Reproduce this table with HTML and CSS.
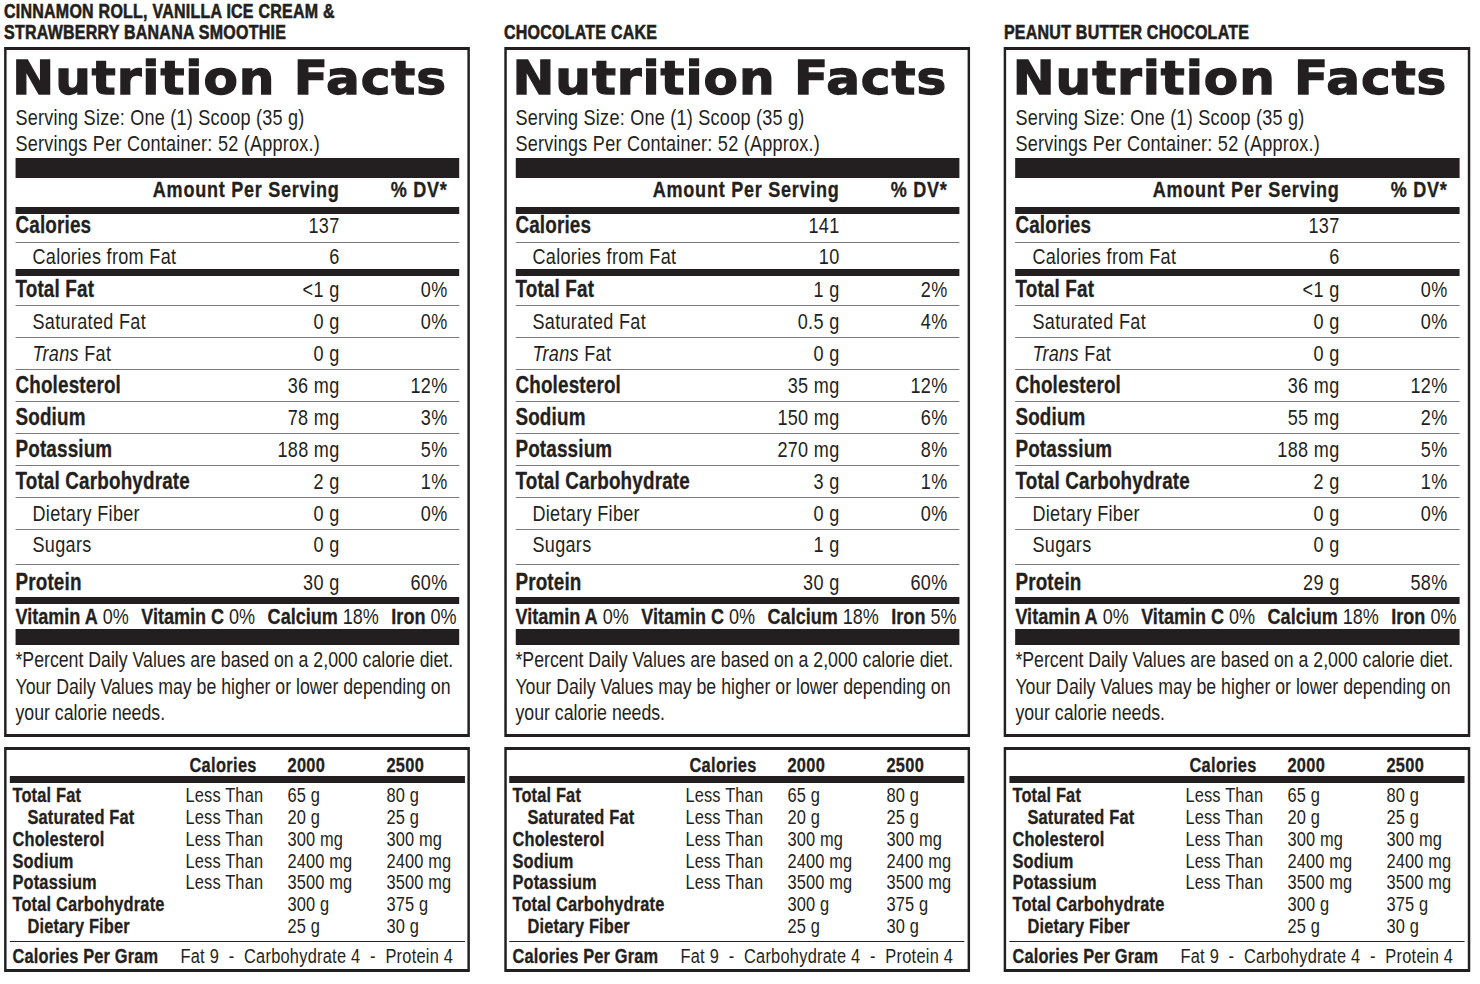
FILE: index.html
```html
<!DOCTYPE html>
<html lang="en">
<head>
<meta charset="utf-8">
<title>Nutrition Facts</title>
<link rel="stylesheet" href="styles.css">
</head>
<body>
<div class="sheet">
<div class="page">

  <section class="panel">
    <h2 class="flavor"><span>CINNAMON ROLL, VANILLA ICE CREAM &amp;<br>STRAWBERRY BANANA SMOOTHIE</span></h2>
    <div class="facts">
      <h1 class="title"><span class="title-t">Nutrition Facts</span></h1>
      <p class="serving first">Serving Size: One (1) Scoop (35 g)</p>
      <p class="serving">Servings Per Container: 52 (Approx.)</p>
      <div class="bar bar20"></div>
      <div class="row head"><span class="n"></span><span class="v">Amount Per Serving</span><span class="d">% DV*</span></div>
      <div class="bar bar7"></div>
      <div class="row cal"><span class="n">Calories</span><span class="v">137</span><span class="d"></span></div>
      <div class="row sub calfat"><span class="n">Calories from Fat</span><span class="v">6</span><span class="d"></span></div>
      <div class="bar bar7"></div>
      <div class="row tf"><span class="n">Total Fat</span><span class="v">&lt;1 g</span><span class="d">0%</span></div>
      <div class="row sub"><span class="n">Saturated Fat</span><span class="v">0 g</span><span class="d">0%</span></div>
      <div class="row sub"><span class="n"><i>Trans</i> Fat</span><span class="v">0 g</span><span class="d"></span></div>
      <div class="row"><span class="n">Cholesterol</span><span class="v">36 mg</span><span class="d">12%</span></div>
      <div class="row"><span class="n">Sodium</span><span class="v">78 mg</span><span class="d">3%</span></div>
      <div class="row"><span class="n">Potassium</span><span class="v">188 mg</span><span class="d">5%</span></div>
      <div class="row"><span class="n">Total Carbohydrate</span><span class="v">2 g</span><span class="d">1%</span></div>
      <div class="row sub"><span class="n">Dietary Fiber</span><span class="v">0 g</span><span class="d">0%</span></div>
      <div class="row sub sug"><span class="n">Sugars</span><span class="v">0 g</span><span class="d"></span></div>
      <div class="row pro"><span class="n">Protein</span><span class="v">30 g</span><span class="d">60%</span></div>
      <div class="bar bar7"></div>
      <div class="vit"><span><b>Vitamin A</b> 0%</span><span><b>Vitamin C</b> 0%</span><span><b>Calcium</b> 18%</span><span><b>Iron</b> 0%</span></div>
      <div class="bar bar16"></div>
      <p class="foot">*Percent Daily Values are based on a 2,000 calorie diet.<br>Your Daily Values may be higher or lower depending on<br>your calorie needs.</p>
    </div>
    <div class="daily">
      <div class="dgrid dhead"><span></span><span class="dcal">Calories</span><span>2000</span><span>2500</span></div>
      <div class="bar dbar"></div>
      <div class="dlist">
        <div class="dgrid"><b>Total Fat</b><span>Less Than</span><span>65 g</span><span>80 g</span></div>
        <div class="dgrid"><b class="ind">Saturated Fat</b><span>Less Than</span><span>20 g</span><span>25 g</span></div>
        <div class="dgrid"><b>Cholesterol</b><span>Less Than</span><span>300 mg</span><span>300 mg</span></div>
        <div class="dgrid"><b>Sodium</b><span>Less Than</span><span>2400 mg</span><span>2400 mg</span></div>
        <div class="dgrid"><b>Potassium</b><span>Less Than</span><span>3500 mg</span><span>3500 mg</span></div>
        <div class="dgrid"><b>Total Carbohydrate</b><span></span><span>300 g</span><span>375 g</span></div>
        <div class="dgrid"><b class="ind">Dietary Fiber</b><span></span><span>25 g</span><span>30 g</span></div>
      </div>
      <div class="cpg"><b class="cpg-l">Calories Per Gram</b><span class="cpg-v">Fat 9  -  Carbohydrate 4  -  Protein 4</span></div>
    </div>
  </section>

  <section class="panel">
    <h2 class="flavor"><span>CHOCOLATE CAKE</span></h2>
    <div class="facts">
      <h1 class="title"><span class="title-t">Nutrition Facts</span></h1>
      <p class="serving first">Serving Size: One (1) Scoop (35 g)</p>
      <p class="serving">Servings Per Container: 52 (Approx.)</p>
      <div class="bar bar20"></div>
      <div class="row head"><span class="n"></span><span class="v">Amount Per Serving</span><span class="d">% DV*</span></div>
      <div class="bar bar7"></div>
      <div class="row cal"><span class="n">Calories</span><span class="v">141</span><span class="d"></span></div>
      <div class="row sub calfat"><span class="n">Calories from Fat</span><span class="v">10</span><span class="d"></span></div>
      <div class="bar bar7"></div>
      <div class="row tf"><span class="n">Total Fat</span><span class="v">1 g</span><span class="d">2%</span></div>
      <div class="row sub"><span class="n">Saturated Fat</span><span class="v">0.5 g</span><span class="d">4%</span></div>
      <div class="row sub"><span class="n"><i>Trans</i> Fat</span><span class="v">0 g</span><span class="d"></span></div>
      <div class="row"><span class="n">Cholesterol</span><span class="v">35 mg</span><span class="d">12%</span></div>
      <div class="row"><span class="n">Sodium</span><span class="v">150 mg</span><span class="d">6%</span></div>
      <div class="row"><span class="n">Potassium</span><span class="v">270 mg</span><span class="d">8%</span></div>
      <div class="row"><span class="n">Total Carbohydrate</span><span class="v">3 g</span><span class="d">1%</span></div>
      <div class="row sub"><span class="n">Dietary Fiber</span><span class="v">0 g</span><span class="d">0%</span></div>
      <div class="row sub sug"><span class="n">Sugars</span><span class="v">1 g</span><span class="d"></span></div>
      <div class="row pro"><span class="n">Protein</span><span class="v">30 g</span><span class="d">60%</span></div>
      <div class="bar bar7"></div>
      <div class="vit"><span><b>Vitamin A</b> 0%</span><span><b>Vitamin C</b> 0%</span><span><b>Calcium</b> 18%</span><span><b>Iron</b> 5%</span></div>
      <div class="bar bar16"></div>
      <p class="foot">*Percent Daily Values are based on a 2,000 calorie diet.<br>Your Daily Values may be higher or lower depending on<br>your calorie needs.</p>
    </div>
    <div class="daily">
      <div class="dgrid dhead"><span></span><span class="dcal">Calories</span><span>2000</span><span>2500</span></div>
      <div class="bar dbar"></div>
      <div class="dlist">
        <div class="dgrid"><b>Total Fat</b><span>Less Than</span><span>65 g</span><span>80 g</span></div>
        <div class="dgrid"><b class="ind">Saturated Fat</b><span>Less Than</span><span>20 g</span><span>25 g</span></div>
        <div class="dgrid"><b>Cholesterol</b><span>Less Than</span><span>300 mg</span><span>300 mg</span></div>
        <div class="dgrid"><b>Sodium</b><span>Less Than</span><span>2400 mg</span><span>2400 mg</span></div>
        <div class="dgrid"><b>Potassium</b><span>Less Than</span><span>3500 mg</span><span>3500 mg</span></div>
        <div class="dgrid"><b>Total Carbohydrate</b><span></span><span>300 g</span><span>375 g</span></div>
        <div class="dgrid"><b class="ind">Dietary Fiber</b><span></span><span>25 g</span><span>30 g</span></div>
      </div>
      <div class="cpg"><b class="cpg-l">Calories Per Gram</b><span class="cpg-v">Fat 9  -  Carbohydrate 4  -  Protein 4</span></div>
    </div>
  </section>

  <section class="panel">
    <h2 class="flavor"><span>PEANUT BUTTER CHOCOLATE</span></h2>
    <div class="facts">
      <h1 class="title"><span class="title-t">Nutrition Facts</span></h1>
      <p class="serving first">Serving Size: One (1) Scoop (35 g)</p>
      <p class="serving">Servings Per Container: 52 (Approx.)</p>
      <div class="bar bar20"></div>
      <div class="row head"><span class="n"></span><span class="v">Amount Per Serving</span><span class="d">% DV*</span></div>
      <div class="bar bar7"></div>
      <div class="row cal"><span class="n">Calories</span><span class="v">137</span><span class="d"></span></div>
      <div class="row sub calfat"><span class="n">Calories from Fat</span><span class="v">6</span><span class="d"></span></div>
      <div class="bar bar7"></div>
      <div class="row tf"><span class="n">Total Fat</span><span class="v">&lt;1 g</span><span class="d">0%</span></div>
      <div class="row sub"><span class="n">Saturated Fat</span><span class="v">0 g</span><span class="d">0%</span></div>
      <div class="row sub"><span class="n"><i>Trans</i> Fat</span><span class="v">0 g</span><span class="d"></span></div>
      <div class="row"><span class="n">Cholesterol</span><span class="v">36 mg</span><span class="d">12%</span></div>
      <div class="row"><span class="n">Sodium</span><span class="v">55 mg</span><span class="d">2%</span></div>
      <div class="row"><span class="n">Potassium</span><span class="v">188 mg</span><span class="d">5%</span></div>
      <div class="row"><span class="n">Total Carbohydrate</span><span class="v">2 g</span><span class="d">1%</span></div>
      <div class="row sub"><span class="n">Dietary Fiber</span><span class="v">0 g</span><span class="d">0%</span></div>
      <div class="row sub sug"><span class="n">Sugars</span><span class="v">0 g</span><span class="d"></span></div>
      <div class="row pro"><span class="n">Protein</span><span class="v">29 g</span><span class="d">58%</span></div>
      <div class="bar bar7"></div>
      <div class="vit"><span><b>Vitamin A</b> 0%</span><span><b>Vitamin C</b> 0%</span><span><b>Calcium</b> 18%</span><span><b>Iron</b> 0%</span></div>
      <div class="bar bar16"></div>
      <p class="foot">*Percent Daily Values are based on a 2,000 calorie diet.<br>Your Daily Values may be higher or lower depending on<br>your calorie needs.</p>
    </div>
    <div class="daily">
      <div class="dgrid dhead"><span></span><span class="dcal">Calories</span><span>2000</span><span>2500</span></div>
      <div class="bar dbar"></div>
      <div class="dlist">
        <div class="dgrid"><b>Total Fat</b><span>Less Than</span><span>65 g</span><span>80 g</span></div>
        <div class="dgrid"><b class="ind">Saturated Fat</b><span>Less Than</span><span>20 g</span><span>25 g</span></div>
        <div class="dgrid"><b>Cholesterol</b><span>Less Than</span><span>300 mg</span><span>300 mg</span></div>
        <div class="dgrid"><b>Sodium</b><span>Less Than</span><span>2400 mg</span><span>2400 mg</span></div>
        <div class="dgrid"><b>Potassium</b><span>Less Than</span><span>3500 mg</span><span>3500 mg</span></div>
        <div class="dgrid"><b>Total Carbohydrate</b><span></span><span>300 g</span><span>375 g</span></div>
        <div class="dgrid"><b class="ind">Dietary Fiber</b><span></span><span>25 g</span><span>30 g</span></div>
      </div>
      <div class="cpg"><b class="cpg-l">Calories Per Gram</b><span class="cpg-v">Fat 9  -  Carbohydrate 4  -  Protein 4</span></div>
    </div>
  </section>

</div>
</div>
</body>
</html>
```

FILE: styles.css
```css
* { box-sizing: border-box; }

html, body { overflow: hidden; }

body {
  margin: 0;
  background: #ffffff;
  color: #231f20;
  font-family: "Liberation Sans", Arial, sans-serif;
}

.sheet {
  width: 1480px;
  height: 984px;
  overflow: hidden;
}

/* The labels are set in a condensed face; no condensed face is installed,
   so the sheet is laid out wider and compressed horizontally by --k. */
.page {
  --k: 0.82;
  display: flex;
  width: calc(1480px / var(--k));
  gap: calc(34px / var(--k));
  padding-left: calc(4px / var(--k));
  transform: scaleX(var(--k));
  transform-origin: 0 0;
}

.panel {
  width: calc(466px / var(--k));
  flex: none;
  display: flex;
  flex-direction: column;
}

.flavor {
  height: 47px;
  margin: 0;
  padding-bottom: 4px;
  display: flex;
  flex-direction: column;
  justify-content: flex-end;
  font-size: 19.5px;
  line-height: 21px;
  font-weight: 700;
  letter-spacing: 0.3px;
  -webkit-text-stroke: 0.6px #231f20;
  white-space: nowrap;
}

/* main label */
.facts {
  border: 3px solid #231f20;
  border-left-width: calc(3px / var(--k));
  border-right-width: calc(3px / var(--k));
  padding: 0 calc(8px / var(--k)) 0 calc(9px / var(--k));
}

.title {
  margin: 0;
  padding-top: 6px;
  height: 50px;
  white-space: nowrap;
}
.title-t {
  display: inline-block;
  margin-left: calc(-3px / var(--k));
  transform: scaleX(calc(1.065 / var(--k)));
  transform-origin: 0 0;
  font-family: "DejaVu Sans", sans-serif;
  font-weight: 700;
  font-size: 47px;
  line-height: 44px;
  letter-spacing: 0.9px;
  -webkit-text-stroke: 1.3px #231f20;
}

.serving {
  margin: 0;
  font-size: 22px;
  line-height: 26px;
  letter-spacing: 0.3px;
  white-space: nowrap;
}
.serving.first { margin-top: 5px; }

.bar { background: #231f20; }
.bar20 { height: 20px; margin-top: 1px; }
.bar7 { height: 7px; }
.bar16 { height: 16px; }

.row {
  display: flex;
  align-items: baseline;
  height: 32px;
  padding-top: 4px;
  padding-right: calc(12px / var(--k));
  border-bottom: 1px solid #7a7a7a;
  line-height: 1;
  font-size: 22px;
  letter-spacing: 0.4px;
  white-space: nowrap;
}
.row .n { flex: 1; font-weight: 700; font-size: 23px; letter-spacing: 0.2px; -webkit-text-stroke: 0.3px #231f20; }
.row .v { text-align: right; }
.row .d { width: calc(108px / var(--k)); text-align: right; }

.row.sub { padding-top: 5.4px; }
.row.sub .n { font-weight: 400; font-size: 22px; letter-spacing: 0.4px; padding-left: calc(17px / var(--k)); -webkit-text-stroke: 0; }

.row.head { height: 29px; padding-top: 1.4px; border-bottom: 0; font-weight: 700; letter-spacing: 0.9px; -webkit-text-stroke: 0.3px #231f20; }
.row.cal { height: 29px; padding-top: 0; }
.row.calfat { height: 26px; padding-top: 3.4px; border-bottom: 0; }
.row.tf { height: 30px; padding-top: 1.5px; }
.row.sug { height: 35px; padding-top: 4.4px; }
.row.pro { height: 32px; padding-top: 5.5px; border-bottom: 0; }

.vit {
  display: flex;
  justify-content: space-between;
  align-items: baseline;
  height: 25px;
  padding-top: 2.4px;
  padding-right: calc(3px / var(--k));
  font-size: 22px;
  line-height: 1;
  white-space: nowrap;
}
.vit b { -webkit-text-stroke: 0.3px #231f20; }

.foot {
  margin: 0;
  padding: 2px 0 7.5px;
  font-size: 21.6px;
  line-height: 26.5px;
  white-space: nowrap;
}

/* daily values table */
.daily {
  margin-top: 10px;
  border: 3px solid #231f20;
  border-left-width: calc(3px / var(--k));
  border-right-width: calc(3px / var(--k));
  padding: 0 calc(3px / var(--k));
  font-size: 20px;
  letter-spacing: 0.2px;
  white-space: nowrap;
}
.daily b { -webkit-text-stroke: 0.3px #231f20; }

.dgrid {
  display: grid;
  grid-template-columns: calc(173px / var(--k)) calc(102px / var(--k)) calc(99px / var(--k)) 1fr;
  padding-left: calc(3px / var(--k));
}

.dhead {
  height: 26px;
  padding-top: 5px;
  line-height: 1;
  font-weight: 700;
  letter-spacing: 0.4px;
  -webkit-text-stroke: 0.3px #231f20;
}
.dcal { padding-left: calc(4px / var(--k)); }

.dbar { height: 7px; }

.dlist {
  padding: 2.2px 0 3px;
  line-height: 21.8px;
  border-bottom: 1px solid #231f20;
}
.dlist b { font-weight: 700; }
.dlist .ind { padding-left: calc(15px / var(--k)); }

.cpg {
  display: flex;
  height: 27px;
  padding-top: 4px;
  padding-left: calc(3px / var(--k));
  line-height: 1;
}
.cpg-l { width: calc(168px / var(--k)); flex: none; font-weight: 700; }
.cpg-v { white-space: pre; letter-spacing: 0.3px; }
```
